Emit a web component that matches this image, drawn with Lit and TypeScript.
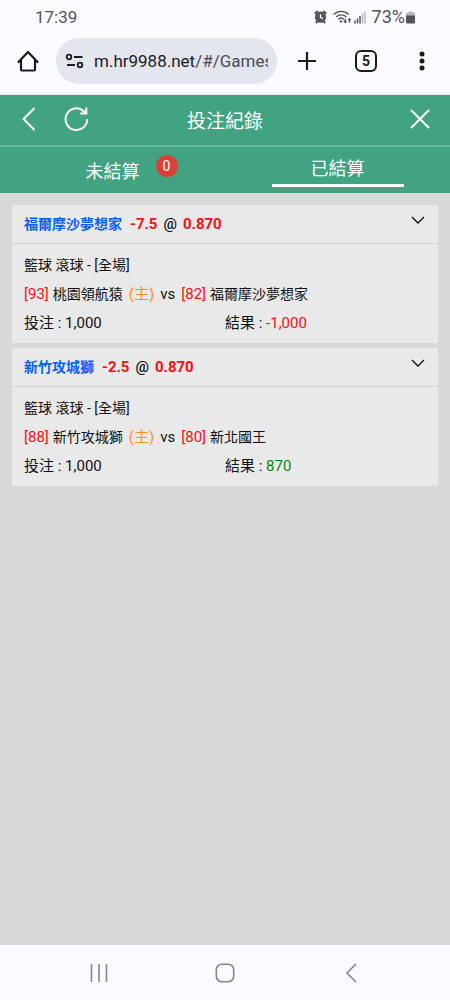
import { LitElement, html, css } from "lit";
import { customElement, property } from "lit/decorators.js";

interface Bet {
  pick: string;
  line: string;
  odds: string;
  category: string;
  homeScore: number;
  home: string;
  awayScore: number;
  away: string;
  stake: string;
  result: string;
}

const BETS: Bet[] = [
  {
    pick: "福爾摩沙夢想家", line: "-7.5", odds: "0.870", category: "籃球 滾球 - [全場]",
    homeScore: 93, home: "桃園領航猿", awayScore: 82, away: "福爾摩沙夢想家",
    stake: "1,000", result: "-1,000",
  },
  {
    pick: "新竹攻城獅", line: "-2.5", odds: "0.870", category: "籃球 滾球 - [全場]",
    homeScore: 88, home: "新竹攻城獅", awayScore: 80, away: "新北國王",
    stake: "1,000", result: "870",
  },
];

const base = css`
  * { box-sizing: border-box; }
  button {
    appearance: none;
    border: 0;
    margin: 0;
    padding: 0;
    background: none;
    color: inherit;
    font: inherit;
    cursor: pointer;
  }
  svg { display: block; fill: none; stroke: currentColor; }
  .solid { fill: currentColor; stroke: none; }
`;

@customElement("status-bar")
export class StatusBar extends LitElement {
  static styles = [base, css`
    :host {
      display: flex;
      align-items: center;
      justify-content: space-between;
      height: 34px;
      padding: 0 33px 0 35px;
      color: #555559;
      font-size: 17px;
      line-height: 20px;
    }
    .icons { display: flex; align-items: center; }
    .wifi { margin-left: 6px; }
    .signal { margin: 0 6px 0 2px; }
    .charge { font-size: 18px; }
  `];
  render() {
    return html`
      <span>17:39</span>
      <div class="icons">
        <svg width="13" height="14" viewBox="0 0 13 14" aria-hidden="true">
          <circle class="solid" cx="6.5" cy="7.2" r="5.6" />
          <path d="M.8 3.800 3.800 1M12.200 3.800 9.200 1M1.800 13l2-2M11.200 13l-2-2" stroke-width="2" />
          <path d="M6.5 4.2v3.200l2.400 1.200" stroke="#fafaff" stroke-width="1.200" />
        </svg>
        <svg class="wifi" width="19" height="14" viewBox="0 0 19 14" aria-hidden="true">
          <path d="M.8 4.4c4.2-4 10.6-4 14.8 0M3 7c3-2.8 7.4-2.8 10.4 0M5.3 9.4c1.7-1.6 4-1.6 5.7 0" stroke-width="1.4" />
          <circle class="solid" cx="8" cy="11.4" r="1.2" />
          <path d="M12.2 8.4v4M10.8 11l1.4 1.6 1.4-1.6M16.4 12.8v-4M15 10.2l1.4-1.6 1.4 1.6" stroke-width="1.2" />
        </svg>
        <svg class="signal" width="12" height="13" viewBox="0 0 12 13" aria-hidden="true">
          <path d="M1 12.5v-3M3.5 12.5v-5M6 12.5V5" stroke-width="1.5" />
          <path d="M8.500 12.500v-10M11 12.500V.5" stroke-width="1.5" opacity=".4" />
        </svg>
        <span class="charge">73%</span>
        <svg width="12" height="13" viewBox="0 0 12 13" aria-hidden="true">
          <path class="solid" opacity=".4" d="M3.500 1.500V.5h4v1H9q1 0 1 1V5H1V2.500q0-1 1-1z" />
          <path class="solid" d="M1 4.500h9V11q0 1.500-1.500 1.500h-6Q1 12.500 1 11z" />
        </svg>
      </div>
    `;
  }
}

@customElement("browser-bar")
export class BrowserBar extends LitElement {
  static styles = [base, css`
    :host {
      display: flex;
      align-items: center;
      height: 61px;
      padding: 0 16px 7px;
      border-bottom: 1px solid #dce6ec;
      color: #1c1c20;
    }
    .home { flex: none; margin-right: 16px; }
    .address {
      flex: 1;
      min-width: 0;
      display: flex;
      align-items: center;
      height: 46px;
      padding: 0 9px;
      border-radius: 23px;
      background: #e3e5ef;
    }
    .site { flex: none; margin-right: 9px; }
    .url {
      flex: 1;
      min-width: 0;
      overflow: hidden;
      white-space: nowrap;
      font-size: 17px;
      line-height: 24px;
    }
    .path { color: #4b4c53; }
    .actions { display: flex; align-items: center; margin-left: 18px; }
    .tabs {
      display: grid;
      place-items: center;
      width: 22px;
      height: 22px;
      margin: 0 33px 0 36px;
      border: 2px solid;
      border-radius: 6px;
      font-size: 14px;
      font-weight: 700;
      line-height: 16px;
    }
  `];
  render() {
    return html`
      <button class="home" aria-label="Home">
        <svg width="24" height="24" viewBox="0 0 24 24" stroke-width="2.2" stroke-linejoin="round">
          <path d="M2.500 13 12 3l9.500 10M5 11v9.500q0 1 1 1h12q1 0 1-1V11" stroke-linecap="round" />
        </svg>
      </button>
      <div class="address">
        <button class="site" aria-label="Site information">
          <svg width="20" height="20" viewBox="0 0 20 20" stroke-width="1.800">
            <circle cx="4" cy="6" r="2.300" /><path d="M9 6h8.500M2 14h8" /><circle cx="15" cy="14" r="2.300" />
          </svg>
        </button>
        <span class="url">m.hr9988.net<span class="path">/#/Games</span></span>
      </div>
      <div class="actions">
        <button aria-label="New tab">
          <svg width="24" height="24" viewBox="0 0 24 24" stroke-width="2.200"><path d="M3 12h18M12 3v18" /></svg>
        </button>
        <button class="tabs" aria-label="5 open tabs">5</button>
        <button aria-label="Menu">
          <svg width="24" height="24" viewBox="0 0 24 24">
            <g class="solid"><circle cx="12" cy="5" r="2.500" /><circle cx="12" cy="12" r="2.500" /><circle cx="12" cy="19" r="2.500" /></g>
          </svg>
        </button>
      </div>
    `;
  }
}

@customElement("record-header")
export class RecordHeader extends LitElement {
  static styles = [base, css`
    :host { display: block; background: #41a381; color: #fff; }
    .bar {
      display: grid;
      grid-template-columns: 1fr auto 1fr;
      align-items: center;
      height: 52px;
      padding: 0 16px;
      border-bottom: 2px solid #6bb59b;
    }
    .left { display: flex; gap: 20px; }
    .close { justify-self: end; }
    .title { margin: 0; padding-top: 4px; font-size: 19px; font-weight: 400; line-height: 28px; }
    .tabs { display: grid; grid-template-columns: 1fr 1fr; height: 46px; }
    .tab { display: flex; justify-content: center; align-items: center; padding-top: 4px; font-size: 18px; line-height: 26px; }
    .tab > span { position: relative; }
    .badge {
      position: absolute;
      left: 70px;
      top: -4px;
      width: 22px;
      height: 22px;
      border-radius: 50%;
      background: #db4038;
      font-size: 14px;
      line-height: 22px;
    }
    .tab.active {
      justify-self: center;
      width: 132px;
      height: 40px;
      padding-top: 6px;
      border-bottom: 3px solid #fff;
    }
  `];
  render() {
    return html`
      <div class="bar">
        <div class="left">
          <button aria-label="返回">
            <svg width="26" height="26" viewBox="0 0 26 26" stroke-width="2"><path d="M18.500 1 7.500 12l11 11" /></svg>
          </button>
          <button aria-label="重新整理">
            <svg width="28" height="26" viewBox="0 0 28 26" stroke-width="2">
              <path d="M25.200 12.200A10.800 10.800 0 1 1 22 4.500l1.500 1.500" /><path d="M24.300.6v6H18.300" />
            </svg>
          </button>
        </div>
        <h1 class="title">投注紀錄</h1>
        <button class="close" aria-label="關閉">
          <svg width="28" height="26" viewBox="0 0 28 26" stroke-width="2"><path d="m5 3 18 18M23 3 5 21" /></svg>
        </button>
      </div>
      <nav class="tabs">
        <button class="tab"><span>未結算<span class="badge">0</span></span></button>
        <button class="tab active" aria-current="page"><span>已結算</span></button>
      </nav>
    `;
  }
}

@customElement("bet-card")
export class BetCard extends LitElement {
  @property({ attribute: false }) bet!: Bet;
  static styles = [base, css`
    :host { display: block; background: #e9e9e9; color: #111; font-size: 15px; line-height: 29px; }
    .head {
      display: flex;
      align-items: center;
      justify-content: space-between;
      height: 39px;
      padding: 0 12px;
      border-bottom: 1px solid #d2d2d2;
    }
    .pick { display: flex; gap: 6px; margin: 0; font-size: 15px; font-weight: 700; }
    .team { padding-right: 2px; font-size: 14px; }
    .pick .team { color: #0a60f5; }
    .at { font-weight: 500; }
    .loss { color: #fb0d12; }
    .win { color: #0a850a; }
    .toggle { align-self: flex-start; padding-top: 7px; }
    .body { padding: 7px 12px 5px; }
    .body p { margin: 0; }
    .category { font-size: 14px; }
    .match { display: flex; flex-wrap: wrap; column-gap: 4px; }
    .host { color: #fa921c; }
    .vs { padding: 0 2px; }
    .money { display: grid; grid-template-columns: 1fr 1fr; }
  `];
  render() {
    const b = this.bet;
    return html`
      <div class="head">
        <h2 class="pick">
          <span class="team">${b.pick}</span><span class="loss">${b.line}</span>
          <span class="at">@</span><span class="loss">${b.odds}</span>
        </h2>
        <button class="toggle" aria-label="收合">
          <svg width="16" height="16" viewBox="0 0 16 16" stroke-width="1.400"><path d="m2 5 6 6 6-6" /></svg>
        </button>
      </div>
      <div class="body">
        <p class="category">${b.category}</p>
        <p class="match">
          <span class="loss">[${b.homeScore}]</span><span class="team">${b.home}</span>
          <span class="host">(主)</span><span class="vs">vs</span>
          <span class="loss">[${b.awayScore}]</span><span class="team">${b.away}</span>
        </p>
        <div class="money">
          <span>投注 : ${b.stake}</span>
          <span>結果 : <span class=${b.result.startsWith("-") ? "loss" : "win"}>${b.result}</span></span>
        </div>
      </div>
    `;
  }
}

@customElement("system-nav")
export class SystemNav extends LitElement {
  static styles = [base, css`
    :host {
      display: grid;
      grid-template-columns: repeat(3, 1fr);
      width: 84%;
      height: 55px;
      margin: 0 auto;
      color: #85858a;
    }
    button { display: grid; place-items: center; }
  `];
  render() {
    return html`
      <button aria-label="Recent apps">
        <svg width="20" height="20" viewBox="0 0 20 20" stroke-width="1.600"><path d="M2.500 1v18M10 1v18M17.500 1v18" /></svg>
      </button>
      <button aria-label="Home screen">
        <svg width="20" height="20" viewBox="0 0 20 20" stroke-width="1.600"><rect x="1.300" y="1.300" width="17.400" height="17.400" rx="5.500" /></svg>
      </button>
      <button aria-label="Back">
        <svg width="20" height="20" viewBox="0 0 20 20" stroke-width="1.600"><path d="m15 1-9 9 9 9" /></svg>
      </button>
    `;
  }
}

@customElement("app-root")
export class AppRoot extends LitElement {
  static styles = [base, css`
    :host {
      display: flex;
      flex-direction: column;
      min-height: 100vh;
      background: #fafaff;
      font-family: Roboto, "Noto Sans CJK TC", sans-serif;
    }
    .list {
      flex: 1;
      display: flex;
      flex-direction: column;
      gap: 5px;
      padding: 12px;
      background: #d8d8d8;
    }
  `];
  render() {
    return html`
      <status-bar></status-bar>
      <browser-bar></browser-bar>
      <record-header></record-header>
      <main class="list">${BETS.map((bet) => html`<bet-card .bet=${bet}></bet-card>`)}</main>
      <system-nav></system-nav>
    `;
  }
}
